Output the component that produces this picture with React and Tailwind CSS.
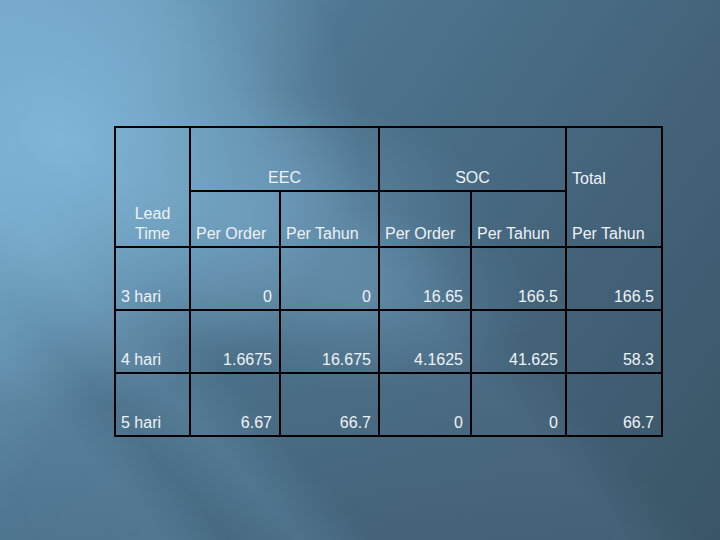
import React from "react";

const rows = [
  ["3 hari", "0", "0", "16.65", "166.5", "166.5"],
  ["4 hari", "1.6675", "16.675", "4.1625", "41.625", "58.3"],
  ["5 hari", "6.67", "66.7", "0", "0", "66.7"],
];

const cell = "border-2 border-black align-bottom px-[5px] pb-[2px] leading-[20px]";

function App() {
  return (
    <div
      className="w-[720px] h-[540px] overflow-hidden pt-[126px] pl-[114px] text-[16px] text-[#eef2f5] bg-[radial-gradient(ellipse_300px_270px_at_60px_140px,rgba(140,196,232,0.7),rgba(140,196,232,0)_100%),radial-gradient(ellipse_240px_130px_at_250px_220px,rgba(140,196,232,0.35),rgba(140,196,232,0)_100%),radial-gradient(ellipse_170px_90px_at_370px_300px,rgba(140,196,232,0.22),rgba(140,196,232,0)_100%),linear-gradient(48deg,rgba(150,200,235,0)_0%,rgba(150,200,235,0.1)_14%,rgba(150,200,235,0)_19%,rgba(150,200,235,0.12)_25%,rgba(150,200,235,0)_31%,rgba(150,200,235,0.08)_52%,rgba(150,200,235,0)_58%),linear-gradient(125deg,#6c9dbf_0%,#5f8eac_18%,#4f7690_33%,#44647b_66%,#3a5567_100%)]"
      style={{ fontFamily: '"Liberation Sans", Arial, sans-serif' }}
    >
      <table className="border-collapse table-fixed w-[547px]">
        <colgroup>
          <col className="w-[75px]" />
          <col className="w-[90px]" />
          <col className="w-[99px]" />
          <col className="w-[92px]" />
          <col className="w-[95px]" />
          <col className="w-[96px]" />
        </colgroup>
        <tbody>
          <tr className="h-[64px]">
            <td rowSpan={2} className={cell + " text-center"}>
              Lead
              <br />
              Time
            </td>
            <td colSpan={2} className={cell + " text-center"}>
              EEC
            </td>
            <td colSpan={2} className={cell + " text-center"}>
              SOC
            </td>
            <td className={cell + " border-b-0"}>Total</td>
          </tr>
          <tr className="h-[56px]">
            <td className={cell}>Per Order</td>
            <td className={cell}>Per Tahun</td>
            <td className={cell}>Per Order</td>
            <td className={cell}>Per Tahun</td>
            <td className={cell + " border-t-0"}>Per Tahun</td>
          </tr>
          {rows.map((r) => (
            <tr key={r[0]} className="h-[63px]">
              {r.map((v, i) => (
                <td key={i} className={cell + (i === 0 ? "" : " text-right pr-[7px]")}>
                  {v}
                </td>
              ))}
            </tr>
          ))}
        </tbody>
      </table>
    </div>
  );
}

export default App;
